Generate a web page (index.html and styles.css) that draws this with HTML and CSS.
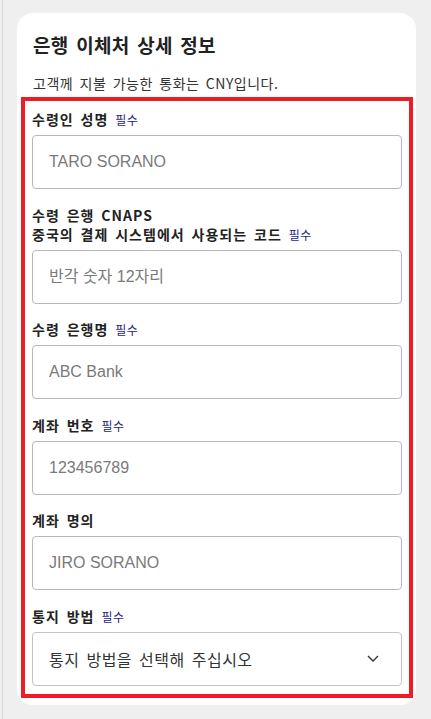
FILE: index.html
```html
<!DOCTYPE html>
<html lang="ko">
<head>
<meta charset="utf-8">
<title>은행 이체처 상세 정보</title>
<link rel="stylesheet" href="styles.css">
</head>
<body>
<div class="page">
  <section class="card">
    <h2 class="card-title">은행 이체처 상세 정보</h2>
    <p class="card-note">고객께 지불 가능한 통화는 CNY입니다.</p>
    <div class="form-box">
      <div class="field">
        <label class="field-label">수령인 성명 <span class="req">필수</span></label>
        <input class="field-input" type="text" placeholder="TARO SORANO">
      </div>
      <div class="field">
        <label class="field-label">수령 은행 CNAPS<br>중국의 결제 시스템에서 사용되는 코드 <span class="req">필수</span></label>
        <input class="field-input" type="text" placeholder="반각 숫자 12자리">
      </div>
      <div class="field">
        <label class="field-label">수령 은행명 <span class="req">필수</span></label>
        <input class="field-input" type="text" placeholder="ABC Bank">
      </div>
      <div class="field">
        <label class="field-label">계좌 번호 <span class="req">필수</span></label>
        <input class="field-input" type="text" placeholder="123456789">
      </div>
      <div class="field">
        <label class="field-label">계좌 명의</label>
        <input class="field-input" type="text" placeholder="JIRO SORANO">
      </div>
      <div class="field">
        <label class="field-label">통지 방법 <span class="req">필수</span></label>
        <div class="field-select">
          <span class="select-text">통지 방법을 선택해 주십시오</span>
          <svg class="chevron" width="12" height="7" viewBox="0 0 12 7"><polyline points="1,1 6,6 11,1" fill="none" stroke="#333" stroke-width="1.4"/></svg>
        </div>
      </div>
    </div>
  </section>
</div>
</body>
</html>
```

FILE: styles.css
```css
* { box-sizing: border-box; }

html, body {
  margin: 0;
  padding: 0;
  background: #efefef;
}

body {
  font-family: "Noto Sans CJK KR", "Liberation Sans", sans-serif;
  color: #222;
  height: 719px;
  overflow: hidden;
}

.page {
  margin-left: 2px;
  border-left: 1px solid #d2d9e2;
  padding: 13px 15px 0 14px;
  min-height: 719px;
}

.card {
  width: 399px;
  background: #fff;
  border-radius: 16px;
  padding: 18px 15px 7px 16px;
}

.card-title {
  margin: 0;
  font-size: 19px;
  line-height: 28px;
  font-weight: 700;
  color: #222;
  letter-spacing: 0.3px;
  word-spacing: 2px;
}

.card-note {
  margin: 14px 0 4px;
  font-size: 14px;
  line-height: 20px;
  color: #333;
  letter-spacing: 0.5px;
  word-spacing: 2px;
}

.form-box {
  margin: 0 -12px;
  border: 4px solid #ee1c25;
  padding: 9px 7px 8.5px;
  display: flex;
  flex-direction: column;
  gap: 16.5px;
}

.field {
  display: flex;
  flex-direction: column;
}

.field-label {
  font-size: 14px;
  line-height: 19px;
  font-weight: 700;
  color: #222;
  margin-bottom: 6px;
  letter-spacing: 1px;
  word-spacing: 2px;
}

.req {
  font-size: 12px;
  font-weight: 400;
  color: #1d2486;
  letter-spacing: 0.5px;
}

.field-input {
  height: 54px;
  width: 100%;
  border: 1px solid #b8b8b8;
  border-radius: 4px;
  padding: 0 16px;
  font-family: "Liberation Sans", "Noto Sans CJK KR", sans-serif;
  font-size: 16px;
  color: #333;
  background: #fff;
  outline: none;
}

.field-input::placeholder {
  color: #7a7a7a;
}

.field-select {
  height: 54px;
  border: 1px solid #c4c4c4;
  border-radius: 4px;
  padding: 0 22px 0 16px;
  display: flex;
  align-items: center;
  justify-content: space-between;
  background: #fff;
}

.select-text {
  font-size: 16px;
  line-height: 20px;
  color: #333;
  letter-spacing: 0.5px;
  word-spacing: 2px;
}

.chevron {
  display: block;
}
```
